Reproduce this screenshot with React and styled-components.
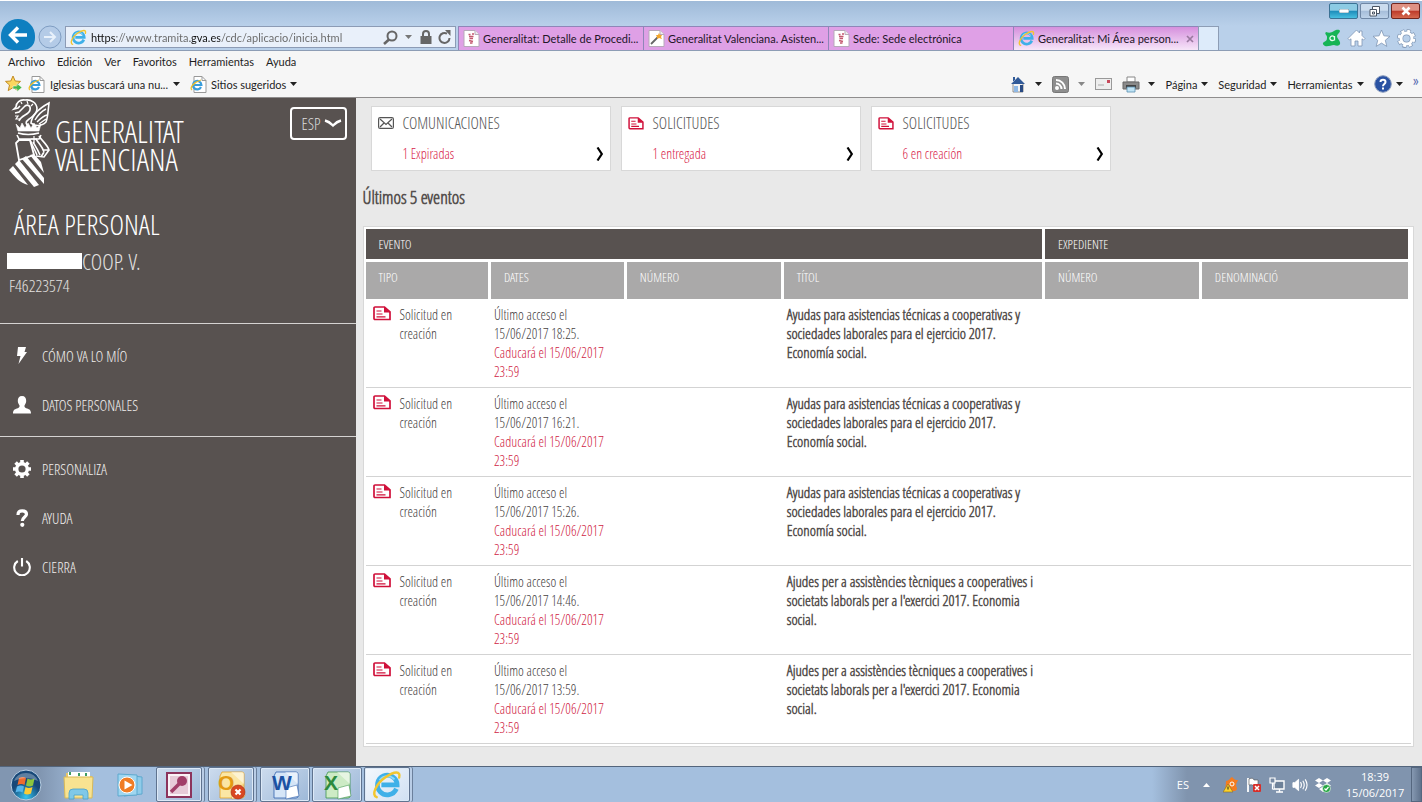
import React from "react";
import styled, { createGlobalStyle } from "styled-components";

const GlobalStyle = createGlobalStyle`
  * { box-sizing: border-box; }
  body { margin: 0; background: #e9e9e9; }
  button, input, select { font: inherit; color: inherit; margin: 0; padding: 0; border: 0; background: none; }
  a { color: inherit; text-decoration: none; }
  svg { display: block; flex: none; }
`;

const condensed = `"Open Sans Condensed Light", "Open Sans Condensed", "Roboto Condensed", "Liberation Sans Narrow", sans-serif`;
const system = `Lato, "Open Sans", sans-serif`;

const Screen = styled.div`
  display: flex;
  flex-direction: column;
  min-height: 100vh;
  font-family: ${system};
  font-size: 11px;
  color: #1e1e1e;
`;

/* ---------- browser ---------- */

const Frame = styled.header`
  background: linear-gradient(#fff 1px, #9fbad8 1px, #b9d0ea 26px);
`;

const TitleBar = styled.div`
  display: flex;
  justify-content: flex-end;
  gap: 2px;
  height: 26px;
  padding: 3px 2px 0 0;
`;

const WindowButton = styled.button`
  display: flex;
  align-items: center;
  justify-content: center;
  width: 29px;
  height: 16px;
  border: 1px solid ${(p) => p.$edge};
  border-radius: 2px;
  background: ${(p) => p.$fill};
`;

const AddressRow = styled.div`
  display: flex;
  align-items: flex-end;
  height: 25px;
  padding-left: 1px;
  border-bottom: 1px solid #8d9db5;
`;

const BackButton = styled.button`
  display: flex;
  align-items: center;
  justify-content: center;
  flex: none;
  width: 34px;
  height: 31px;
  border-radius: 17px 17px 12px 12px;
  background: #0e7fc0;
`;

const ForwardButton = styled.button`
  display: flex;
  flex: none;
  width: 30px;
  height: 26px;
  align-items: center;
  justify-content: center;
`;

const AddressBox = styled.div`
  display: flex;
  align-items: center;
  flex: 0 1 391px;
  min-width: 0;
  height: 22px;
  margin-bottom: 2px;
  padding: 0 2px 0 4px;
  border: 1px solid #8c9bb5;
  background: #e9f0fa;
`;

const AddressInput = styled.input`
  flex: 1;
  min-width: 0;
  margin-left: 4px;
  outline: none;
  color: transparent;
  background: linear-gradient(90deg, #111 0 25px, #666 25px 99px, #111 99px 129px, #666 129px);
  background-clip: text;
  -webkit-background-clip: text;
`;

const IconButton = styled.button`
  display: flex;
  align-items: center;
  justify-content: center;
  width: ${(p) => p.$w || 18}px;
`;

const Tabs = styled.div`
  display: flex;
  flex: 1;
  min-width: 0;
  height: 24px;
  margin-left: 2px;
`;

const Tab = styled.button`
  display: flex;
  align-items: center;
  gap: 3px;
  flex: 0 1 185px;
  min-width: 0;
  padding: 0 4px;
  overflow: hidden;
  white-space: nowrap;
  border: 1px solid #8f86b8;
  border-width: 1px 0 0 1px;
  color: #221528;
  background: ${(p) => (p.$active ? "linear-gradient(#d58fdd, #f7e6f9)" : "#dfa0e6")};
`;

const TabLabel = styled.span`
  flex: 1;
  text-align: left;
`;

const NewTab = styled.button`
  width: 21px;
  border: 1px solid #8d9db5;
  border-bottom: 0;
  background: #ddebfa;
`;

const Tools = styled.div`
  display: flex;
  align-items: center;
  gap: 5px;
  height: 24px;
  padding-right: 6px;
`;

const MenuBar = styled.nav`
  display: flex;
  align-items: center;
  gap: 12px;
  height: 20px;
  padding: 0 8px;
  background: #f6f6f6;
`;

const FavoritesBar = styled.div`
  display: flex;
  align-items: center;
  justify-content: space-between;
  height: 27px;
  padding: 0 3px 0 5px;
  background: #f6f6f6;
  border-bottom: 1px solid #8f8d8d;
`;

const Group = styled.div`
  display: flex;
  align-items: center;
  gap: ${(p) => p.$gap}px;
`;

const BarButton = styled.button`
  display: flex;
  align-items: center;
  gap: ${(p) => p.$gap || 4}px;
  white-space: nowrap;
`;

const More = styled.button`
  align-self: flex-start;
  color: #5567b0;
  font-size: 15px;
  line-height: 10px;
`;

/* ---------- page ---------- */

const Page = styled.div`
  display: flex;
  flex: 1;
  font-family: ${condensed};
  background: #e9e9e9;
`;

const Sidebar = styled.aside`
  flex: 0 0 25%;
  color: #fff;
  background: #585250;
`;

const Brand = styled.div`
  display: flex;
  justify-content: space-between;
  align-items: flex-start;
  height: 102px;
  padding: 0 9px 0 8px;
`;

const Wordmark = styled.a`
  display: flex;
  gap: 4px;
  font-size: 31px;
  line-height: 28px;
`;

const WordmarkText = styled.span`
  padding-top: 19px;
`;

const Language = styled.label`
  position: relative;
  display: flex;
  align-items: center;
  width: 57px;
  height: 33px;
  margin-top: 9px;
  border: 2px solid #fff;
  border-radius: 4px;

  svg {
    position: absolute;
    right: 3px;
    pointer-events: none;
  }
`;

const LanguageSelect = styled.select`
  width: 100%;
  height: 100%;
  padding-left: 10px;
  appearance: none;
  font-size: 16px;
  color: #ddd;
`;

const AreaTitle = styled.h1`
  margin: 0;
  padding: 5px 14px 0;
  font-size: 28px;
  line-height: 38px;
  font-weight: normal;
`;

const Owner = styled.div`
  display: flex;
  align-items: center;
  padding-left: 7px;
  font-size: 22px;
  line-height: 28px;
  margin-top: 4px;
  color: #e4e2e1;
`;

const Blank = styled.span`
  width: 75px;
  height: 16px;
  background: #fff;
`;

const OwnerId = styled.div`
  padding: 0 9px 26px;
  font-size: 17px;
  line-height: 22px;
  color: #e4e2e1;
`;

const NavGroup = styled.nav`
  display: flex;
  flex-direction: column;
  padding: 7px 0;
  border-top: 1px solid #d5d3d2;
`;

const NavLink = styled.a`
  display: flex;
  align-items: center;
  gap: 11px;
  height: 49px;
  padding-left: 13px;
  font-size: 15px;
  color: #f0eeed;
`;

const Main = styled.main`
  flex: 1;
  min-width: 0;
  padding: 8px 8px 19px 7px;
`;

const Cards = styled.div`
  display: flex;
  gap: 10px;
  padding-left: 8px;
`;

const Card = styled.a`
  display: grid;
  grid-template-columns: 25px 1fr 8px;
  flex: 0 0 23%;
  height: 65px;
  padding: 0 6px 2px;
  border: 1px solid #d8d8d8;
  background: #fff;
  align-items: center;
`;

const CardTitle = styled.span`
  grid-column: 2 / 4;
  font-size: 16px;
  color: #555;
`;

const CardNote = styled.span`
  grid-column: 2;
  font-size: 14px;
  color: #d8234a;
`;

const SectionTitle = styled.h2`
  margin: 12px 0 15px;
  font-size: 18px;
  line-height: 28px;
  font-weight: bold;
  color: #55504e;
`;

const Panel = styled.section`
  padding: 2px;
  border: 1px solid #d8d8d8;
  background: #fff;
`;

const Events = styled.table`
  width: 100%;
  table-layout: fixed;
  border-spacing: 0;
`;

const GroupHead = styled.th`
  height: 33px;
  padding: 0 13px;
  border: solid #fff;
  border-width: 0 3px 3px 0;
  background: #585250;
  background-clip: padding-box;
  color: #fff;
  font-size: 13px;
  font-weight: normal;
  text-align: left;
`;

const ColumnHead = styled.th`
  width: ${(p) => p.$w}%;
  height: 37px;
  padding: 6px 13px 0;
  border-right: 3px solid #fff;
  background: #aaa9a9;
  background-clip: padding-box;
  color: #fff;
  font-size: 13px;
  line-height: 19px;
  font-weight: normal;
  text-align: left;
  vertical-align: top;
`;

const Cell = styled.td`
  padding: 6px 3px;
  border-bottom: 1px solid #d3d3d3;
  color: ${(p) => (p.$strong ? "#55504e" : "#45413f")};
  font-size: ${(p) => (p.$strong ? 15 : 14)}px;
  line-height: 19px;
  font-weight: ${(p) => (p.$strong ? "bold" : "normal")};
  vertical-align: top;
  white-space: nowrap;
`;

const Kind = styled.div`
  display: flex;
  gap: 9px;
  padding-left: 4px;

  svg {
    margin-top: 1px;
  }
`;

const Line = styled.span`
  display: block;
  color: ${(p) => (p.$alert ? "#cf1c43" : "inherit")};
`;

/* ---------- taskbar ---------- */

const Taskbar = styled.footer`
  display: flex;
  justify-content: space-between;
  height: 36px;
  border-top: 1px solid #53657c;
  background: linear-gradient(90deg, #8196b1 0, #8196b1 40px, #a4bfde 90px, #a4bfde calc(100% - 270px), #8094ae calc(100% - 235px));
`;

const Apps = styled.div`
  display: flex;
  align-items: center;
`;

const AppButton = styled.button`
  display: flex;
  align-items: center;
  justify-content: center;
  width: 52px;
  height: 35px;
`;

const OpenApp = styled(AppButton)`
  width: ${(p) => (p.$stack ? 46 : 50)}px;
  margin-right: ${(p) => (p.$stack ? 6 : 2)}px;
  border: 1px solid #5f738f;
  border-radius: 2px;
  background: ${(p) => (p.$active ? "linear-gradient(135deg, #f4f8fd, #d0e0f2)" : "linear-gradient(135deg, #cddcee, #9db8d8)")};
  box-shadow: inset 0 0 0 1px #dce9f7${(p) => (p.$stack ? ", 2px 0 0 #b9cde6, 3px 0 0 #6b809c" : "")};
`;

const Tray = styled.div`
  display: flex;
  align-items: center;
  font-family: "Open Sans", sans-serif;
  color: #fff;
`;

const Clock = styled.div`
  width: 72px;
  margin-left: 8px;
  text-align: center;
  line-height: 16px;
`;

const ShowDesktop = styled.button`
  width: 11px;
  height: 35px;
  border: 1px solid #55677f;
  background: linear-gradient(90deg, #8598b1, #5f728c);
`;

/* ---------- icons ---------- */

const Explorer = ({ size = 17 }) => (
  <svg width={size} height={size} viewBox="0 0 32 32" fill="none">
    <path d="M26 20a10.500 10.500 0 1 1 .8-4.200H10" stroke="#3fb0e8" strokeWidth="5" />
    <path d="M24 10a10 10 0 0 0-16 1" stroke="#8fdaf9" strokeWidth="1.800" />
    <path d="M5 29C-1 27 4 15 14 8S31 1 29 8" stroke="#f2c62f" strokeWidth="2.600" strokeLinecap="round" />
  </svg>
);

const Sheet = ({ children }) => (
  <svg width="17" height="17" viewBox="0 0 17 17">
    <path d="M1 .5h11l4 4v12H1z" fill="#fff" stroke="#b7a9ba" />
    <path d="M12 .5v4h4" fill="#eee" stroke="#b7a9ba" />
    {children}
  </svg>
);

const GvaSheet = () => (
  <Sheet>
    <path d="M5.500 4.500h2M9 4h2M6 6.500h4.500M6.500 8.500h3.500M6 10.500l4 1M7 13h2.500" stroke="#c4586f" strokeWidth="1.600" fill="none" />
  </Sheet>
);

const WandSheet = () => (
  <Sheet>
    <path d="M3 14l7-7" stroke="#666" strokeWidth="1.800" />
    <path d="M11 3l1 2 2 0-1 2 1 2-3-1-2 1V7L8 5h2z" fill="#f2a62b" />
  </Sheet>
);

const IeSheet = () => (
  <svg width="17" height="17" viewBox="0 0 17 17" fill="none">
    <path d="M4 .5h8l4 4v12H4z" fill="#fff" stroke="#999" />
    <path d="M12 .5v4h4" stroke="#999" />
    <path d="M11 11a4.200 4.200 0 1 1 .4-2H4" stroke="#3a9ddb" strokeWidth="2.200" />
    <path d="M2 14C-1 12 4 6 11 4" stroke="#efbf2b" strokeWidth="1.300" />
  </svg>
);

const Caret = ({ color = "#222" }) => (
  <svg width="7" height="4" viewBox="0 0 7 4"><path d="M0 0h7L3.500 4z" fill={color} /></svg>
);

const FormIcon = ({ size = 18 }) => (
  <svg width={size} height={size === 18 ? 15 : 13} viewBox="0 0 18 15" fill="none">
    <path d="M2 1h9.500L17 6v7.500H2A1 1 0 0 1 1 12.500V2a1 1 0 0 1 1-1z" stroke="#d0103a" strokeWidth="1.700" />
    <path d="M11 1v5.500h6z" fill="#d0103a" />
    <path d="M3.500 5h5M3.500 8h6M3.500 10.800h9" stroke="#d0103a" strokeWidth="1.200" />
  </svg>
);

const Envelope = () => (
  <svg width="16" height="12" viewBox="0 0 16 12" fill="none" stroke="#555" strokeWidth="1.200">
    <rect x=".6" y=".6" width="14.800" height="10.800" rx="1.500" />
    <path d="M2 2l6 5.500L14 2M2 10l4-4M14 10l-4-4" />
  </svg>
);

const Chevron = () => (
  <svg width="8" height="14" viewBox="0 0 8 14" fill="none">
    <path d="M1.500 .5L5.800 7 1.500 13.500" stroke="#000" strokeWidth="2.200" />
  </svg>
);

const Crest = () => (
  <svg width="43" height="89" viewBox="0 0 43 89" fill="none" stroke="#fff" strokeWidth="1.600">
    <path d="M8 9C8 5 12 1 17 2c6-1 12 3 12 9 0 5-5 8-9 11-3 2-2 5 0 5" />
    <path d="M8 9l-2 2 4-1 2-2M7 15l4-1 6-6c3-2 6 0 5 4-1 5-9 5-11 11" />
    <path d="M7 18l3 0-2 3 4 0M13 4l1 2M19 3l1 3M25 6l-2 2" strokeWidth="1.200" />
    <path d="M23 25c1-8 7-14 18-20-1 8-1 14-3 19-3 3-8 4-12 3z" />
    <path d="M27 22c3-5 7-9 11-11M29 24c3-3 6-6 10-7M31 26l7-5" strokeWidth="1.400" />
    <path d="M8 26l2 7h21l2-7-4 4-3-5-3 5-3-5-3 5-3-5-2 5z" fill="#fff" strokeWidth=".6" />
    <path d="M10 35q10 3 21 0M9 37l2 4 20 0 2-4" />
    <path d="M11 42L8 45l3 17 15-5-4-15z" strokeWidth="1.800" />
    <path d="M22 42c2 5 5 10 7 15M31 38c3 5 8 8 10 14l-5 7-8-1M28 41c3 5 6 7 8 13M25 44c3 5 5 8 7 13M36 54l-3 5M41 52l-6 0" />
    <path d="M26 38v7M23 41h6" strokeWidth="1.200" />
    <g fill="#fff" stroke="none">
      <path d="M1 72l4-4 15 19c-8-2-13-8-19-15z" />
      <path d="M7 66l4-4 20 25-5 2z" />
      <path d="M14 61l4-3 18 22v6z" />
      <path d="M22 57l4-1 7 8 3 11z" />
    </g>
  </svg>
);

const NavIcon = ({ name }) => (
  <svg width="18" height="18" viewBox="0 0 18 18" fill="#fff">
    {name === "bolt" && <path d="M5 0h8l-1.500 5H14L5.500 17 7.500 9H4z" />}
    {name === "user" && <path d="M9 0c3 0 4.300 2 4.200 5-.1 2-1 3.300-1.700 4.500-.3 1.700.5 2.300 2.500 3 2.600 1 4 1.600 4 4.900H0c0-3.300 1.400-3.900 4-4.900 2-.7 2.800-1.300 2.500-3C5.800 8.300 4.900 7 4.800 5 4.700 2 6 0 9 0z" />}
    {name === "gear" && (
      <>
        <circle cx="9" cy="9" r="5.300" fill="none" stroke="#fff" strokeWidth="3.400" />
        <g stroke="#fff" strokeWidth="3.600">
          <path d="M9 0v3M9 15v3M0 9h3M15 9h3M2.600 2.600l2.200 2.200M13.200 13.200l2.200 2.200M15.400 2.600l-2.200 2.200M4.800 13.200l-2.200 2.200" />
        </g>
      </>
    )}
    {name === "help" && (
      <>
        <path d="M5 6C5 3 6.500 1.800 9.200 1.800S13.500 3 13.500 5.200C13.500 8 9.300 8 9.300 12" fill="none" stroke="#fff" strokeWidth="3.200" />
        <circle cx="9.300" cy="15.800" r="2.100" />
      </>
    )}
    {name === "power" && (
      <path d="M4.800 3A7.800 7.800 0 1 0 13.200 3M9 0v8.500" fill="none" stroke="#fff" strokeWidth="2.100" />
    )}
  </svg>
);

const Office = ({ color, pale, letter, children }) => (
  <svg width="30" height="30" viewBox="0 0 30 30">
    <path d="M6 2h20q2 0 2 2v22q0 2-2 2H4V6z" fill={pale} stroke={color} strokeWidth=".7" />
    <path d="M15 2h11q2 0 2 2v10z" fill="#fff" opacity=".5" />
    <path d="M16 18l11-3 2 11-13 3z" fill="#fff" stroke={color} strokeWidth=".5" />
    <text x="2" y="20" fontFamily="Liberation Sans, sans-serif" fontWeight="bold" fontSize="21" fill={color}>{letter}</text>
    {children}
  </svg>
);

/* ---------- data ---------- */

const cards = [
  { icon: <Envelope />, title: "COMUNICACIONES", note: "1 Expiradas" },
  { icon: <FormIcon size={16} />, title: "SOLICITUDES", note: "1 entregada" },
  { icon: <FormIcon size={16} />, title: "SOLICITUDES", note: "6 en creación" },
];

const spanish = ["Ayudas para asistencias técnicas a cooperativas y", "sociedades laborales para el ejercicio 2017.", "Economía social."];
const valencian = ["Ajudes per a assistències tècniques a cooperatives i", "societats laborals per a l'exercici 2017. Economia", "social."];

const events = [
  { time: "18:25", title: spanish },
  { time: "16:21", title: spanish },
  { time: "15:26", title: spanish },
  { time: "14:46", title: valencian },
  { time: "13:59", title: valencian },
];

const columns = [
  ["TIPO", 12],
  ["DATES", 13],
  ["NÚMERO", 15],
  ["TÍTOL", 25],
  ["NÚMERO", 15],
  ["DENOMINACIÓ", 20],
];

const menus = ["Archivo", "Edición", "Ver", "Favoritos", "Herramientas", "Ayuda"];

const Browser = () => (
  <Frame>
    <TitleBar>
      <WindowButton aria-label="Minimizar" $edge="#3b7294" $fill="linear-gradient(#8ccbe4 45%, #1d8cba 50%, #49bfe0)">
        <svg width="10" height="4"><rect width="10" height="4" rx="1" fill="#fff" stroke="#4b6c80" strokeWidth=".6" /></svg>
      </WindowButton>
      <WindowButton aria-label="Restaurar" $edge="#6f87a5" $fill="linear-gradient(#cbdcee 45%, #a5bdd9 50%, #bdd2e9)">
        <svg width="12" height="11" fill="#fff" stroke="#4b5563"><path d="M3.500.5h7v7h-7z" /><path d="M1 3.500h6.500v6.500H1zM3.500 6h2v2h-2z" /></svg>
      </WindowButton>
      <WindowButton aria-label="Cerrar" $edge="#70261f" $fill="linear-gradient(#df9284 45%, #bd3a2a 50%, #d5694f)">
        <svg width="12" height="10"><path d="M2.500 1.500l7 7M9.500 1.500l-7 7" stroke="#fff" strokeWidth="2.600" /></svg>
      </WindowButton>
    </TitleBar>

    <AddressRow>
      <BackButton aria-label="Atrás">
        <svg width="20" height="18" fill="none" stroke="#fff" strokeWidth="3.400"><path d="M19 9H3M10 1.500L2.500 9l7.500 7.500" /></svg>
      </BackButton>
      <ForwardButton aria-label="Adelante">
        <svg width="24" height="24" fill="none" stroke="#7f9dc2"><circle cx="12" cy="12" r="11" fill="#b4cbe7" /><path d="M6 12h11M12 7l5 5-5 5" stroke="#e8f1fb" strokeWidth="2" /></svg>
      </ForwardButton>
      <AddressBox>
        <Explorer />
        <AddressInput aria-label="Dirección" defaultValue="https://www.tramita.gva.es/cdc/aplicacio/inicia.html" />
        <IconButton aria-label="Buscar">
          <svg width="15" height="15" fill="none" stroke="#666" strokeWidth="2"><circle cx="9" cy="6" r="4.500" /><path d="M6 9.500L1 14" strokeWidth="2.600" /></svg>
        </IconButton>
        <IconButton aria-label="Historial"><Caret color="#777" /></IconButton>
        <IconButton aria-label="Certificado">
          <svg width="12" height="14"><path d="M3 7V4a3 3 0 0 1 6 0v3" fill="none" stroke="#666" strokeWidth="2" /><rect x=".5" y="6" width="11" height="8" fill="#666" /></svg>
        </IconButton>
        <IconButton aria-label="Actualizar">
          <svg width="13" height="14" fill="none"><path d="M11.500 8A5 5 0 1 1 9 3.600" stroke="#666" strokeWidth="2" /><path d="M7 0h5.500v6z" fill="#666" /></svg>
        </IconButton>
      </AddressBox>
      <Tabs>
        <Tab><GvaSheet /><TabLabel>Generalitat: Detalle de Procedi...</TabLabel></Tab>
        <Tab><WandSheet /><TabLabel>Generalitat Valenciana. Asisten...</TabLabel></Tab>
        <Tab><GvaSheet /><TabLabel>Sede: Sede electrónica</TabLabel></Tab>
        <Tab $active>
          <Explorer />
          <TabLabel>Generalitat: Mi Área person...</TabLabel>
          <svg width="8" height="8"><path d="M1 1l6 6M7 1L1 7" stroke="#9a799f" strokeWidth="1.700" /></svg>
        </Tab>
        <NewTab aria-label="Nueva pestaña" />
      </Tabs>
      <Tools>
        <IconButton $w={20} aria-label="Complemento">
          <svg width="19" height="18" viewBox="0 0 19 18"><path d="M4 3c3 1 5 1 8-1 2-1 5-2 6 0 0 2-3 3-3 5 0 3 4 5 3 8-1 2-3 2-6 1-3 0-6 2-9 1-2-1-3-3-1-4 3-1 3-3 3-5S2 5 4 3z" fill="#16b455" /><path d="M12.500 7v4.500M12.500 9a2.300 2.300 0 1 0-.8 2" fill="none" stroke="#e6fff0" strokeWidth="1.300" /></svg>
        </IconButton>
        <IconButton $w={20} aria-label="Inicio">
          <svg width="19" height="18" viewBox="0 0 19 18"><path d="M9.500 1L1 9.500 2.500 11 4 9.800V17h4v-5h3v5h4V9.800l1.500 1.200L18 9.500l-3-3V2h-2.500v2z" fill="#fff" stroke="#7f96b4" strokeWidth=".8" /></svg>
        </IconButton>
        <IconButton $w={20} aria-label="Favoritos">
          <svg width="19" height="18" viewBox="0 0 19 18"><path d="M9.500 1l2.400 5.800 6.100.5-4.700 4 1.500 6.100-5.300-3.300-5.300 3.300 1.500-6.100-4.700-4 6.100-.5z" fill="#fff" stroke="#7f96b4" strokeWidth=".8" /></svg>
        </IconButton>
        <IconButton $w={20} aria-label="Opciones">
          <svg width="19" height="19" viewBox="0 0 19 19" fill="none"><circle cx="9.500" cy="9.500" r="8" stroke="#8299b7" strokeWidth="3.200" strokeDasharray="4 2.280" /><circle cx="9.500" cy="9.500" r="5.500" stroke="#8299b7" strokeWidth="4.400" /><circle cx="9.500" cy="9.500" r="7.700" stroke="#fff" strokeWidth="2.200" strokeDasharray="3 3.050" strokeDashoffset="-.5" /><circle cx="9.500" cy="9.500" r="5.500" stroke="#fff" strokeWidth="3" /></svg>
        </IconButton>
      </Tools>
    </AddressRow>

    <MenuBar>
      {menus.map((m) => <BarButton key={m}>{m}</BarButton>)}
    </MenuBar>

    <FavoritesBar>
      <Group $gap={5}>
        <BarButton aria-label="Agregar a favoritos">
          <svg width="18" height="18" viewBox="0 0 18 18"><path d="M8 1l2.200 5 5.300.4-4 3.600 1.300 5.500L8 12.600l-4.800 3L4.500 10l-4-3.600L5.800 6z" fill="#fbd65e" stroke="#c28b25" /><path d="M8 11h4V8.500l5 4-5 4V14H8z" fill="#47b649" stroke="#fff" strokeWidth=".5" /></svg>
        </BarButton>
        <BarButton $gap={5}><IeSheet />Iglesias buscará una nu...<Caret /></BarButton>
        <span />
        <BarButton $gap={4}><IeSheet />Sitios sugeridos<Caret /></BarButton>
      </Group>
      <Group $gap={10}>
        <BarButton $gap={9} aria-label="Página principal">
          <svg width="16" height="17" viewBox="0 0 16 17"><path d="M3 7h10v9H3z" fill="#f4f4f4" stroke="#777" strokeWidth=".8" /><path d="M8 1L1 8h14zM3 1h2v4H3z" fill="#315a98" /><path d="M4 10h4v6H4z" fill="#8fb9e6" /><path d="M10 9h3v7h-3z" fill="#284a83" /></svg>
          <Caret />
        </BarButton>
        <BarButton $gap={9} aria-label="Fuentes">
          <svg width="17" height="17" fill="none" stroke="#fff" strokeWidth="2"><rect x=".5" y=".5" width="16" height="16" rx="2" fill="#8e8e8e" stroke="#777" strokeWidth="1" /><circle cx="5" cy="12" r="1" /><path d="M4 7.500a5.500 5.500 0 0 1 5.500 5.500M4 4a9 9 0 0 1 9 9" /></svg>
          <Caret color="#888" />
        </BarButton>
        <BarButton aria-label="Leer correo">
          <svg width="17" height="12"><rect x=".5" y=".5" width="16" height="11" fill="#eee" stroke="#999" /><path d="M12 2h3v3h-3z" fill="#c7495b" /><path d="M3 7h6" stroke="#aaa" /></svg>
        </BarButton>
        <BarButton $gap={8} aria-label="Imprimir">
          <svg width="18" height="17" viewBox="0 0 18 17"><path d="M5 1h8v5H5z" fill="#fff" stroke="#888" /><path d="M1 6h16v7H1z" fill="#8a8a8a" stroke="#666" /><path d="M4 9h10v3H4z" fill="#444" /><path d="M5 11h8v5H5z" fill="#bfe3f5" stroke="#5b8fb0" strokeWidth=".8" /></svg>
          <Caret />
        </BarButton>
        <BarButton>Página<Caret /></BarButton>
        <BarButton>Seguridad<Caret /></BarButton>
        <BarButton>Herramientas<Caret /></BarButton>
        <BarButton aria-label="Ayuda">
          <svg width="18" height="18" viewBox="0 0 18 18"><circle cx="9" cy="9" r="8.300" fill="#2a52a3" stroke="#8c9dbd" /><path d="M6.500 7C6.500 4 11.500 4 11.500 7c0 2-2.500 2-2.500 4.200M9 12.500v2" stroke="#fff" strokeWidth="2" fill="none" /></svg>
          <Caret />
        </BarButton>
        <More aria-label="Más">»</More>
      </Group>
    </FavoritesBar>
  </Frame>
);

const SidePanel = () => (
  <Sidebar>
    <Brand>
      <Wordmark href="#inicio">
        <Crest />
        <WordmarkText>GENERALITAT<br />VALENCIANA</WordmarkText>
      </Wordmark>
      <Language>
        <LanguageSelect aria-label="Idioma" defaultValue="ESP">
          <option>ESP</option>
        </LanguageSelect>
        <svg width="18" height="9" fill="none" stroke="#fff" strokeWidth="2.400"><path d="M1 1.500Q5 2.500 9 6.500Q13 2.500 17 1.500" /></svg>
      </Language>
    </Brand>
    <AreaTitle>ÁREA PERSONAL</AreaTitle>
    <Owner><Blank />COOP. V.</Owner>
    <OwnerId>F46223574</OwnerId>
    <NavGroup>
      <NavLink href="#como"><NavIcon name="bolt" />CÓMO VA LO MÍO</NavLink>
      <NavLink href="#datos"><NavIcon name="user" />DATOS PERSONALES</NavLink>
    </NavGroup>
    <NavGroup>
      <NavLink href="#personaliza"><NavIcon name="gear" />PERSONALIZA</NavLink>
      <NavLink href="#ayuda"><NavIcon name="help" />AYUDA</NavLink>
      <NavLink href="#cierra"><NavIcon name="power" />CIERRA</NavLink>
    </NavGroup>
  </Sidebar>
);

const EventTable = () => (
  <Panel>
    <Events>
      <colgroup>
        {columns.map(([, width], i) => <col key={i} width={`${width}%`} />)}
      </colgroup>
      <thead>
        <tr>
          <GroupHead colSpan={4}>EVENTO</GroupHead>
          <GroupHead colSpan={2}>EXPEDIENTE</GroupHead>
        </tr>
        <tr>
          {columns.map(([name, width], i) => <ColumnHead key={i} $w={width}>{name}</ColumnHead>)}
        </tr>
      </thead>
      <tbody>
        {events.map((e) => (
          <tr key={e.time}>
            <Cell>
              <Kind><FormIcon /><span>Solicitud en<br />creación</span></Kind>
            </Cell>
            <Cell>
              <Line>Último acceso el</Line>
              <Line>15/06/2017 {e.time}.</Line>
              <Line $alert>Caducará el 15/06/2017</Line>
              <Line $alert>23:59</Line>
            </Cell>
            <Cell />
            <Cell $strong>{e.title.map((t) => <Line key={t}>{t}</Line>)}</Cell>
            <Cell />
            <Cell />
          </tr>
        ))}
      </tbody>
    </Events>
  </Panel>
);

const Desktop = () => (
  <Taskbar>
    <Apps>
      <AppButton aria-label="Inicio">
        <svg width="32" height="32" viewBox="0 0 32 32">
          <defs><radialGradient id="orb" cy=".9"><stop stopColor="#35c5ef" /><stop offset="1" stopColor="#174878" /></radialGradient></defs>
          <circle cx="16" cy="16" r="15" fill="url(#orb)" stroke="#b9cee2" />
          <path d="M9 9q4-2 7 0l-1.500 7q-3-2-7 0z" fill="#ef6b2e" /><path d="M17.500 9.500q3 2 7 0L23 16.500q-4 2-7 0z" fill="#8cc63e" />
          <path d="M7 17.500q4-2 7 0l-1.500 6q-3-2-7 0z" fill="#55b5ec" /><path d="M15.500 18q3 2 7 0L21 24.500q-4 2-7 0z" fill="#fdcb34" />
          <path d="M4 12a13 13 0 0 1 24 0q-12-6-24 0z" fill="#fff" opacity=".3" />
        </svg>
      </AppButton>
      <AppButton aria-label="Explorador de Windows">
        <svg width="31" height="30" viewBox="0 0 31 30"><path d="M3 3h10l2 3h14v22H3z" fill="#e7c668" /><path d="M5 2h22v5H5z" fill="#fff" /><path d="M7 2v3M16 3v3M23 3v3" stroke="#3d9c65" strokeWidth="2" /><path d="M1 7h29l-1 21H2z" fill="#f8e391" stroke="#d9b957" /><path d="M6 29v-6q0-4 4-4h11q4 0 4 4v6h-5v-4h-9v4z" fill="#7fc8e8" stroke="#4aa1c9" strokeWidth=".8" /></svg>
      </AppButton>
      <AppButton aria-label="Reproductor">
        <svg width="26" height="26" viewBox="0 0 26 26"><path d="M7 3l18 2v17L7 24z" fill="#8fcbe9" stroke="#5da8ce" /><path d="M1 2l19 1v20L1 24z" fill="#9fd6f0" stroke="#5da8ce" /><circle cx="10" cy="13" r="8" fill="#f07c25" stroke="#fff" /><path d="M7.500 8.500v9l8-4.500z" fill="#fff" /></svg>
      </AppButton>
      <OpenApp $stack aria-label="Access">
        <svg width="26" height="26" viewBox="0 0 26 26"><path d="M1 1h24v24H1z" fill="#faf2f6" stroke="#8c345c" strokeWidth="2" /><path d="M4 4h18v18H4z" fill="#e7cbd8" /><circle cx="16" cy="9" r="5" fill="#a13e68" /><path d="M13 12l-8 8" stroke="#a13e68" strokeWidth="3.500" /></svg>
      </OpenApp>
      <OpenApp $stack aria-label="Outlook">
        <Office color="#e39a13" pale="#fbe6a4" letter="O"><circle cx="22" cy="22" r="7" fill="#d94722" stroke="#a52e13" strokeWidth=".6" /><path d="M19.500 19.500l5 5M24.500 19.500l-5 5" stroke="#fff" strokeWidth="2.200" /></Office>
      </OpenApp>
      <OpenApp aria-label="Word"><Office color="#1c52a3" pale="#d5e5f7" letter="W" /></OpenApp>
      <OpenApp aria-label="Excel"><Office color="#2c8a3d" pale="#cdebc5" letter="X" /></OpenApp>
      <OpenApp $stack $active aria-label="Internet Explorer"><Explorer size={30} /></OpenApp>
    </Apps>
    <Tray>
      <Group $gap={7}>
        <span>ES</span>
        <IconButton aria-label="Mostrar iconos ocultos" $w={20}>
          <svg width="7" height="4"><path d="M0 4h7L3.500 0z" fill="#fff" /></svg>
        </IconButton>
        <svg width="16" height="16" viewBox="0 0 16 16"><path d="M3 4c3 0 4-3 6-4 2 1 1 3 6 3-1 3-3 4-1 8 0 4-4 3-7 3H4c-3-1-1-4-1-10z" fill="#f47c20" /><path d="M5 7l5 8H0z" fill="#fbd32c" stroke="#8b691e" strokeWidth=".6" /><path d="M5 9.500v3" stroke="#222" /><circle cx="9" cy="7" r="2" fill="none" stroke="#fff" /></svg>
        <svg width="16" height="16" viewBox="0 0 16 16"><path d="M2 1v14" stroke="#fff" strokeWidth="1.800" /><path d="M3 2q4-2 5 1h4v6H8Q6 7 3 8z" fill="#fff" stroke="#555" strokeWidth=".6" /><rect x="7" y="7" width="8" height="8" rx="1" fill="#d72f2a" /><path d="M9 9l4 4M13 9l-4 4" stroke="#fff" strokeWidth="1.500" /></svg>
        <svg width="16" height="16" viewBox="0 0 16 16"><path d="M5 4h10v8H5zM7 15h7M10.500 12v3" fill="#6d8199" stroke="#fff" strokeWidth="1.400" /><path d="M1 1h5v5H1zM3.500 6v6H5" fill="#778aa3" stroke="#fff" strokeWidth="1.200" /></svg>
        <svg width="16" height="16" viewBox="0 0 17 16" fill="none" stroke="#fff"><path d="M1 5.500h2L7 2v12l-4-3.500H1z" fill="#fff" /><path d="M9 5q2 3 0 6M11.500 3.500q3 4.500 0 9M14 2q4 6 0 12" strokeWidth="1.200" /></svg>
        <svg width="16" height="16" viewBox="0 0 16 16"><path d="M4 1l4 2.500-4 2.500L0 3.500zM12 1l4 2.500L12 6 8 3.500zM4 6l4 2.500L4 11 0 8.500zM12 6l4 2.500-4 2.500-4-2.500zM4 12l4-2.500 4 2.500-4 3z" fill="#fff" /><circle cx="11.500" cy="11.500" r="4" fill="#28a745" stroke="#fff" strokeWidth=".6" /><path d="M9.500 11.500l1.500 1.500 2.500-3" fill="none" stroke="#fff" strokeWidth="1.200" /></svg>
      </Group>
      <Clock>18:39<br />15/06/2017</Clock>
      <ShowDesktop aria-label="Mostrar escritorio" />
    </Tray>
  </Taskbar>
);

const App = () => (
  <Screen>
    <GlobalStyle />
    <Browser />
    <Page>
      <SidePanel />
      <Main>
        <Cards>
          {cards.map((c, i) => (
            <Card key={i} href="#detalle">
              {c.icon}
              <CardTitle>{c.title}</CardTitle>
              <span />
              <CardNote>{c.note}</CardNote>
              <Chevron />
            </Card>
          ))}
        </Cards>
        <SectionTitle>Últimos 5 eventos</SectionTitle>
        <EventTable />
      </Main>
    </Page>
    <Desktop />
  </Screen>
);

export default App;
